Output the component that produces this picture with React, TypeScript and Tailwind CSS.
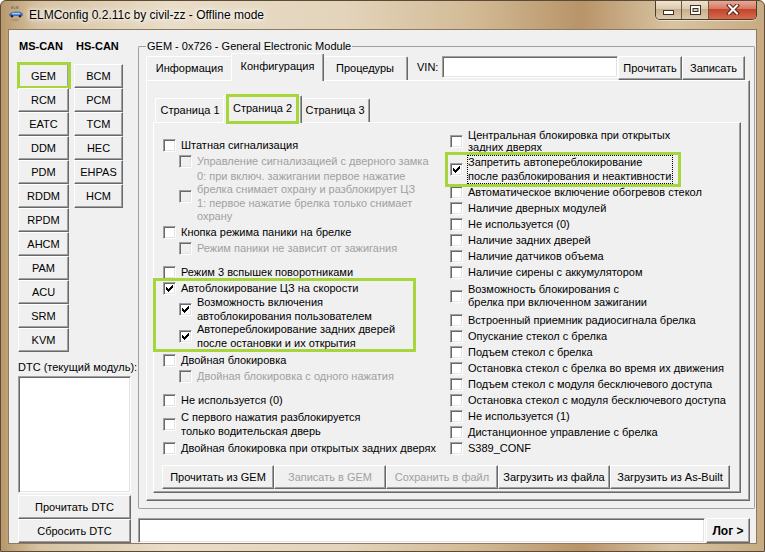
import clsx from "clsx"
import type { ReactNode } from "react"

const raised =
  "border border-t-white border-l-white border-r-[#696969] border-b-[#696969] shadow-[inset_-1px_-1px_0_#a0a0a0]"
const sunken =
  "border border-t-[#a0a0a0] border-l-[#a0a0a0] border-r-white border-b-white shadow-[inset_1px_1px_0_#696969,inset_-1px_-1px_0_#e3e3e3]"
const lime = "pointer-events-none absolute border-[3px] border-[#a6d63c]"

function Button({
  children,
  className,
  disabled,
}: {
  children?: ReactNode
  className?: string
  disabled?: boolean
}) {
  return (
    <div
      className={clsx(
        "flex shrink-0 items-center justify-center bg-[#f0f0f0] whitespace-nowrap",
        raised,
        disabled ? "text-[#a0a0a0]" : "text-black",
        className
      )}
    >
      {children}
    </div>
  )
}

function Check({ checked, disabled }: { checked?: boolean; disabled?: boolean }) {
  return (
    <span
      className={clsx(
        "flex h-[13px] w-[13px] shrink-0 items-center justify-center",
        sunken,
        disabled ? "bg-[#f0f0f0]" : "bg-white"
      )}
    >
      {checked && (
        <svg width="7" height="7" viewBox="0 0 7 7" shapeRendering="crispEdges">
          <path
            d="M6 0h1v1h-1z M5 1h2v1h-2z M0 2h1v1h-1z M4 2h3v1h-3z M0 3h2v1h-2z M3 3h3v1h-3z M0 4h5v1h-5z M1 5h3v1h-3z M2 6h1v1h-1z"
            fill="#000"
          />
        </svg>
      )}
    </span>
  )
}

function Opt({
  lines,
  checked,
  disabled,
  indent,
  className,
  leading = "leading-[16px]",
  textClass,
}: {
  lines: string[]
  checked?: boolean
  disabled?: boolean
  indent?: boolean
  className?: string
  leading?: string
  textClass?: string
}) {
  return (
    <div className={clsx("flex items-center", indent && "pl-[16px]", className)}>
      <Check checked={checked} disabled={disabled} />
      <span
        className={clsx(
          "ml-[5px] whitespace-nowrap",
          leading,
          disabled ? "text-[#a0a0a0]" : "text-black",
          textClass
        )}
      >
        {lines.map((l, i) => (
          <span key={i} className="block">
            {l}
          </span>
        ))}
      </span>
    </div>
  )
}

function Tab({ label, active, w }: { label: string; active?: boolean; w: string }) {
  return (
    <div
      className={clsx(
        "flex shrink-0 items-center justify-center rounded-t-[2px] border border-b-0 border-t-white border-l-white border-r-[#696969] bg-[#f0f0f0] shadow-[inset_-1px_0_0_#a0a0a0]",
        w,
        active ? "relative z-10 -mx-[2px] mb-[-1px] h-[28px] pb-[2px]" : "h-[24px]"
      )}
    >
      {label}
    </div>
  )
}

function ElmIcon() {
  return (
    <svg width="16" height="16" viewBox="0 0 16 16">
      <text x="3" y="4" fontSize="3.6" fill="#555" fontFamily="Liberation Sans">
        ELM
      </text>
      <path d="M1 9.5 Q3 6.5 7 6.8 L10 6.6 Q14 7 15 9.5 L14.5 11 L1.5 11 Z" fill="#3d6fb5" />
      <rect x="4" y="7.8" width="8" height="1.6" fill="#a9c6ec" />
      <circle cx="4" cy="11.2" r="1.2" fill="#223" />
      <circle cx="12" cy="11.2" r="1.2" fill="#223" />
      <text x="3" y="15.5" fontSize="2.8" fill="#777" fontFamily="Liberation Sans">
        config
      </text>
    </svg>
  )
}

function CaptionButtons() {
  return (
    <div className="-mt-[1px] mr-[7px] ml-auto flex h-[20px] overflow-hidden rounded-b-[5px] border border-t-0 border-[#4a3c2c] shadow-[0_1px_0_rgba(255,255,255,0.5)]">
      <div className="flex w-[26px] items-end justify-center border-r border-[#6b5a45] bg-[linear-gradient(180deg,#f1e6d4_0%,#dccab0_45%,#c9b08c_50%,#dbc8ab_100%)] pb-[4px]">
        <svg width="11" height="5" viewBox="0 0 11 5">
          <rect x="0.5" y="0.5" width="10" height="4" fill="#fff" stroke="#3c3226" />
        </svg>
      </div>
      <div className="flex w-[27px] items-center justify-center border-r border-[#6b5a45] bg-[linear-gradient(180deg,#f1e6d4_0%,#dccab0_45%,#c9b08c_50%,#dbc8ab_100%)]">
        <svg width="11" height="10" viewBox="0 0 11 10">
          <rect x="0.5" y="0.5" width="10" height="9" fill="#fff" stroke="#3c3226" />
          <rect x="3" y="3.5" width="5" height="3" fill="#d9c7aa" stroke="#3c3226" />
        </svg>
      </div>
      <div className="flex w-[47px] items-center justify-center bg-[linear-gradient(180deg,#eab0a0_0%,#d77a64_45%,#c3442c_50%,#d86a4c_100%)]">
        <svg width="14" height="11" viewBox="0 0 14 11">
          <path d="M3 1.5 L11 9.5 M11 1.5 L3 9.5" stroke="#5a2418" strokeWidth="4" strokeLinecap="square" />
          <path d="M3 1.5 L11 9.5 M11 1.5 L3 9.5" stroke="#fff" strokeWidth="2" strokeLinecap="square" />
        </svg>
      </div>
    </div>
  )
}

const msCan = ["GEM", "RCM", "EATC", "DDM", "PDM", "RDDM", "RPDM", "AHCM", "PAM", "ACU", "SRM", "KVM"]
const hsCan = ["BCM", "PCM", "TCM", "HEC", "EHPAS", "HCM"]

function LeftPanel() {
  return (
    <div className="flex w-[129px] shrink-0 flex-col pt-[9px] pl-[9px]">
      <div className="flex h-[14px] items-center font-bold leading-[14px]">
        <span className="ml-[1px] w-[57px]">MS-CAN</span>
        <span>HS-CAN</span>
      </div>
      <div className="mt-[11px] flex items-start gap-[5px]">
        <div className="flex w-[51px] flex-col">
          {msCan.map((m) => (
            <div key={m} className="relative">
              <Button className="h-[24px] w-[51px]">{m}</Button>
              {m === "GEM" && <div className={clsx(lime, "-top-[2px] -left-[1px] h-[27px] w-[54px]")} />}
            </div>
          ))}
        </div>
        <div className="flex w-[49px] flex-col">
          {hsCan.map((m) => (
            <Button key={m} className="h-[24px] w-[49px]">
              {m}
            </Button>
          ))}
        </div>
      </div>
      <div className="mt-[8px] leading-[14px] whitespace-nowrap">DTC (текущий модуль):</div>
      <div className={clsx("mt-[2px] w-[113px] flex-1 bg-white", sunken)} />
      <Button className="mt-[2px] h-[24px] w-[113px]">Прочитать DTC</Button>
      <Button className="h-[24px] w-[113px]">Сбросить DTC</Button>
    </div>
  )
}

function LeftOptions() {
  return (
    <div className="flex w-[287px] shrink-0 flex-col pt-[14px]">
      <Opt className="h-[16px]" lines={["Штатная сигнализация"]} />
      <Opt className="h-[16px]" indent disabled lines={["Управление сигнализацией с дверного замка"]} />
      <Opt
        className="mt-[1px]"
        indent
        disabled
        leading="leading-[13.3px]"
        lines={[
          "0:  при включ. зажигании первое нажатие",
          "брелка снимает охрану и разблокирует ЦЗ",
          "1: первое нажатие брелка только снимает",
          "охрану",
        ]}
      />
      <Opt className="mt-[1px] h-[16px]" lines={["Кнопка режима паники на брелке"]} />
      <Opt className="h-[16px]" indent disabled lines={["Режим паники не зависит от зажигания"]} />
      <Opt className="mt-[8px] h-[16px]" lines={["Режим 3 вспышек поворотниками"]} />
      <div className="relative">
        <Opt className="h-[16px]" checked lines={["Автоблокирование ЦЗ на скорости"]} />
        <Opt
          indent
          checked
          leading="leading-[13.5px]"
          lines={["Возможность включения", "автоблокирования пользователем"]}
        />
        <Opt
          indent
          checked
          leading="leading-[13.5px]"
          lines={["Автопереблокирование задних дверей", "после остановки и их открытия"]}
        />
        <div className={clsx(lime, "-top-[2px] -left-[10px] h-[74px] w-[263px]")} />
      </div>
      <Opt className="mt-[2px] h-[16px]" lines={["Двойная блокировка"]} />
      <Opt className="h-[16px]" indent disabled lines={["Двойная блокировка с одного нажатия"]} />
      <Opt className="mt-[8px] h-[16px]" lines={["Не используется (0)"]} />
      <Opt
        className="mt-[3px]"
        leading="leading-[13.5px]"
        lines={["С первого нажатия разблокируется", "только водительская дверь"]}
      />
      <Opt className="mt-[2px] h-[16px]" lines={["Двойная блокировка при открытых задних дверях"]} />
    </div>
  )
}

const rightSingles1 = [
  "Наличие дверных модулей",
  "Не используется (0)",
  "Наличие задних дверей",
  "Наличие датчиков объема",
  "Наличие сирены с аккумулятором",
]

const rightSingles2 = [
  "Встроенный приемник радиосигнала брелка",
  "Опускание стекол с брелка",
  "Подъем стекол с брелка",
  "Остановка стекол с брелка во время их движения",
  "Подъем стекол с модуля бесключевого доступа",
  "Остановка стекол с модуля бесключевого доступа",
  "Не используется (1)",
  "Дистанционное управление с брелка",
  "S389_CONF",
]

function RightOptions() {
  return (
    <div className="flex flex-1 flex-col pt-[6px]">
      <Opt leading="leading-[12px]" lines={["Центральная блокировка при открытых", "задних дверях"]} />
      <div className="relative mt-[3px]">
        <Opt
          checked
          leading="leading-[13.5px]"
          textClass="outline-1 outline-dotted outline-black pr-[1px]"
          lines={["Запретить автопереблокирование", "после разблокирования и неактивности"]}
        />
        <div className={clsx(lime, "-top-[4px] -left-[5px] h-[35px] w-[236px]")} />
      </div>
      <Opt className="mt-[1px] h-[16px]" lines={["Автоматическое включение обогревов стекол"]} />
      {rightSingles1.map((t) => (
        <Opt key={t} className="h-[16px]" lines={[t]} />
      ))}
      <Opt
        className="mt-[3px]"
        leading="leading-[13px]"
        lines={["Возможность блокирования с", "брелка при включенном зажигании"]}
      />
      <div className="mt-[3px] flex flex-col">
        {rightSingles2.map((t) => (
          <Opt key={t} className="h-[16px]" lines={[t]} />
        ))}
      </div>
    </div>
  )
}

function ConfigPage() {
  return (
    <div className="flex flex-1 flex-col border border-t-white border-l-white border-r-[#696969] border-b-[#696969] pt-[13px] pr-[8px] pb-[7px] pl-[6px] shadow-[inset_-1px_-1px_0_#a0a0a0]">
      <div className="flex h-[28px] items-end pl-[2px]">
        <Tab label="Страница 1" w="w-[70px]" />
        <div className="relative z-10 flex items-end">
          <Tab label="Страница 2" w="w-[79px]" active />
          <div className={clsx(lime, "-top-[1px] left-[1px] z-20 h-[30px] w-[73px]")} />
        </div>
        <Tab label="Страница 3" w="w-[70px]" />
      </div>
      <div className={clsx("flex flex-1 flex-col bg-[#f0f0f0]", raised)}>
        <div className="flex pl-[9px]">
          <LeftOptions />
          <RightOptions />
        </div>
        <div className="mt-auto mb-[3px] flex pl-[8px]">
          <Button className="h-[24px] w-[112px]">Прочитать из GEM</Button>
          <Button className="h-[24px] w-[112px]" disabled>
            Записать в GEM
          </Button>
          <Button className="h-[24px] w-[112px]" disabled>
            Сохранить в файл
          </Button>
          <Button className="h-[24px] w-[112px]">Загрузить из файла</Button>
          <Button className="h-[24px] w-[120px]">Загрузить из As-Built</Button>
        </div>
      </div>
    </div>
  )
}

function GroupBox() {
  return (
    <div className="mr-[1px] flex flex-1 flex-col">
      <div className="flex h-[13px]">
        <div className="mt-[6px] w-[8px] rounded-tl-[2px] border-t border-l border-[#a0a0a0]" />
        <span className="px-[1px] leading-[13px] whitespace-nowrap">GEM - 0x726 - General Electronic Module</span>
        <div className="mt-[6px] flex-1 rounded-tr-[2px] border-t border-r border-[#a0a0a0]" />
      </div>
      <div className="flex flex-1 flex-col rounded-b-[2px] border-x border-b border-[#a0a0a0] pr-[4px] pb-[7px] pl-[7px]">
        <div className="flex h-[27px] items-end">
          <Tab label="Информация" w="w-[87px]" />
          <Tab label="Конфигурация" w="w-[93px]" active />
          <Tab label="Процедуры" w="w-[86px]" />
          <div className="mt-[3px] ml-[9px] flex self-start">
            <span className="w-[25px] leading-[22px]">VIN:</span>
            <div className={clsx("h-[22px] w-[176px] bg-white", sunken)} />
            <Button className="h-[24px] w-[64px]">Прочитать</Button>
            <Button className="h-[24px] w-[63px]">Записать</Button>
          </div>
        </div>
        <ConfigPage />
      </div>
    </div>
  )
}

export default function App() {
  return (
    <div className="flex h-[552px] w-[765px] flex-col overflow-hidden rounded-t-[6px] border border-[#5a4a36] bg-[linear-gradient(90deg,#b8986c_0%,#d7c3a2_5%,#e9ddc8_22%,#e3d4bb_45%,#d2ba95_62%,#b89468_76%,#d8c4a3_88%,#c7ab82_100%)] text-[11px] text-black [font-family:'Liberation_Sans',Arial,sans-serif]">
      <div className="flex h-[28px] shrink-0 items-start">
        <div className="mt-[4px] ml-[7px]">
          <ElmIcon />
        </div>
        <span className="mt-[7px] ml-[5px] text-[12px] leading-[14px] [text-shadow:0_0_6px_#fff,0_0_3px_#fff,0_0_10px_#fff]">
          ELMConfig 0.2.11c by civil-zz - Offline mode
        </span>
        <CaptionButtons />
      </div>
      <div className="flex flex-1 px-[7px] pb-[7px]">
        <div className="flex flex-1 border border-[#8c7a60] bg-[#f0f0f0]">
          <LeftPanel />
          <div className="flex flex-1 flex-col pt-[10px]">
            <GroupBox />
            <div className="mt-[9px] flex h-[25px]">
              <div className={clsx("w-[567px] bg-white", sunken)} />
              <Button className="ml-[1px] w-[44px] text-[12px] font-bold">Лог &gt;</Button>
            </div>
          </div>
        </div>
      </div>
    </div>
  )
}
